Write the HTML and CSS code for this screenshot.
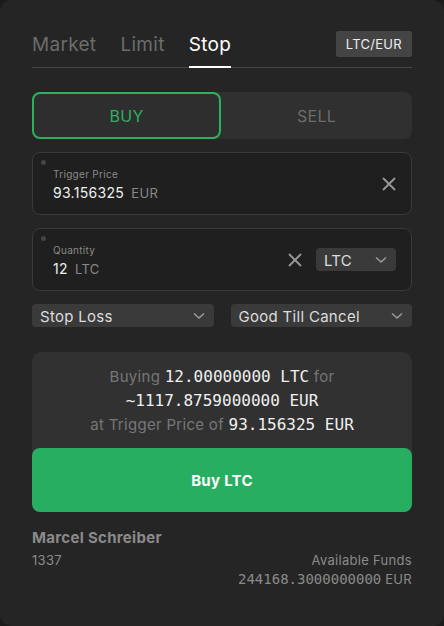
FILE: index.html
```html
<!DOCTYPE html>
<html lang="en">
<head>
    <meta charset="UTF-8">
    <meta name="viewport" content="width=device-width, initial-scale=1.0">
    <title>Stop Order</title>
    <link rel="stylesheet" href="styles.css">
</head>
<body>

<div class="panel">
    <div class="tabs">
        <span class="tab">Market</span>
        <span class="tab">Limit</span>
        <span class="tab active">Stop</span>
        <span class="pair">LTC/EUR</span>
    </div>

    <div class="side-toggle">
        <div class="side buy">BUY</div>
        <div class="side sell">SELL</div>
    </div>

    <div class="field">
        <span class="dot"></span>
        <div class="field-body">
            <div class="field-label">Trigger Price</div>
            <div class="field-value">93.156325 <span class="unit">EUR</span></div>
        </div>
        <svg class="clear" width="14" height="14" viewBox="0 0 14 14"><path d="M1 1L13 13M13 1L1 13" stroke="#9a9a9a" stroke-width="1.8" fill="none"/></svg>
    </div>

    <div class="field">
        <span class="dot"></span>
        <div class="field-body">
            <div class="field-label">Quantity</div>
            <div class="field-value">12 <span class="unit">LTC</span></div>
        </div>
        <svg class="clear" width="14" height="14" viewBox="0 0 14 14"><path d="M1 1L13 13M13 1L1 13" stroke="#9a9a9a" stroke-width="1.8" fill="none"/></svg>
        <div class="select small">
            <span>LTC</span>
            <svg width="12" height="8" viewBox="0 0 12 8"><path d="M1 1.5L6 6L11 1.5" stroke="#9a9a9a" stroke-width="1.6" fill="none"/></svg>
        </div>
    </div>

    <div class="options">
        <div class="select">
            <span>Stop Loss</span>
            <svg width="12" height="8" viewBox="0 0 12 8"><path d="M1 1.5L6 6L11 1.5" stroke="#9a9a9a" stroke-width="1.6" fill="none"/></svg>
        </div>
        <div class="select">
            <span>Good Till Cancel</span>
            <svg width="12" height="8" viewBox="0 0 12 8"><path d="M1 1.5L6 6L11 1.5" stroke="#9a9a9a" stroke-width="1.6" fill="none"/></svg>
        </div>
    </div>

    <div class="summary">
        <div class="summary-text">
            <div>Buying <span class="num">12.00000000 LTC</span> for</div>
            <div><span class="num">~1117.8759000000 EUR</span></div>
            <div>at Trigger Price of <span class="num">93.156325 EUR</span></div>
        </div>
        <button class="submit">Buy LTC</button>
    </div>

    <div class="account">
        <div class="name">Marcel Schreiber</div>
        <div class="account-row">
            <span>1337</span>
            <span>Available Funds</span>
        </div>
        <div class="funds"><span class="num">244168.3000000000</span> EUR</div>
    </div>
</div>

</body>
</html>
```

FILE: styles.css
```css
body {
    margin: 0;
    background-color: #1b1b1b;
    font-family: Inter, "Noto Sans", sans-serif;
    letter-spacing: 0.3px;
}
.panel {
    width: 444px;
    height: 626px;
    box-sizing: border-box;
    background-color: #252525;
    border-radius: 12px;
    padding: 31px 32px 0;
}
.num {
    font-family: "DejaVu Sans Mono", monospace;
    letter-spacing: 0;
}

/* tabs */
.tabs {
    display: flex;
    align-items: center;
    border-bottom: 1px solid #444;
    height: 36px;
}
.tab {
    font-size: 19px;
    color: #6c6c6c;
    margin-right: 24px;
    height: 36px;
    line-height: 27px;
    box-sizing: border-box;
}
.tab.active {
    color: #fff;
    border-bottom: 2px solid #fff;
    margin-bottom: -1px;
    height: 37px;
}
.pair {
    margin-left: auto;
    align-self: flex-start;
    background-color: #444;
    color: #eee;
    font-size: 13px;
    padding: 0 10px;
    height: 26px;
    line-height: 26px;
    border-radius: 2px;
}

/* buy / sell */
.side-toggle {
    display: flex;
    margin-top: 24px;
    height: 47px;
    background-color: #303030;
    border-radius: 8px;
}
.side {
    display: flex;
    align-items: center;
    justify-content: center;
    font-size: 16px;
    color: #6c6c6c;
    border-radius: 8px;
    box-sizing: border-box;
}
.side.buy {
    width: 189px;
    color: #2bb15f;
    border: 2px solid #2bb15f;
    background-color: #2e2e2e;
}
.side.sell {
    flex: 1;
}

/* input fields */
.field {
    position: relative;
    display: flex;
    align-items: center;
    margin-top: 13px;
    height: 63px;
    box-sizing: border-box;
    border: 1px solid #3a3a3a;
    border-radius: 8px;
    background-color: #1f1f1f;
    padding: 0 15px 0 20px;
}
.dot {
    position: absolute;
    left: 8px;
    top: 7px;
    width: 5px;
    height: 5px;
    border-radius: 50%;
    background-color: #444;
}
.field-body {
    flex: 1;
    margin-top: 1px;
}
.field-label {
    font-size: 10px;
    color: #8a8a8a;
    margin-bottom: 4px;
}
.field-value {
    font-size: 14px;
    color: #eee;
}
.unit {
    font-size: 13px;
    color: #888;
    margin-left: 3px;
}
.clear {
    flex: none;
}

/* selects */
.select {
    display: flex;
    align-items: center;
    justify-content: space-between;
    background-color: #3a3a3a;
    border-radius: 4px;
    height: 23px;
    padding: 1px 9px 0 8px;
    box-sizing: border-box;
    font-size: 15px;
    color: #ddd;
}
.select.small {
    width: 80px;
    margin-left: 14px;
}
.options {
    display: flex;
    gap: 17px;
    margin-top: 13px;
}
.options .select {
    flex: 1;
}

/* summary */
.summary {
    margin-top: 25px;
    background-color: #313131;
    border-radius: 10px;
}
.summary-text {
    padding: 13px 0 11px;
    text-align: center;
    font-size: 15px;
    line-height: 24px;
    color: #777;
}
.summary-text .num {
    color: #f0f0f0;
    font-size: 16px;
}
.submit {
    display: block;
    width: 100%;
    height: 64px;
    border: none;
    border-radius: 8px;
    background-color: #28ae61;
    color: #fff;
    font-family: Inter, sans-serif;
    letter-spacing: 0.3px;
    font-size: 15px;
    font-weight: bold;
}

/* account */
.account {
    margin-top: 16px;
    color: #8a8a8a;
    font-size: 13px;
}
.name {
    font-size: 15px;
    font-weight: bold;
    margin-bottom: 5px;
}
.account-row {
    display: flex;
    justify-content: space-between;
}
.funds {
    text-align: right;
    margin-top: 3px;
}
.funds .num {
    font-size: 14px;
}
```
